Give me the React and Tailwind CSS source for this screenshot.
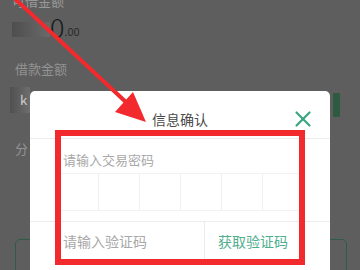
import { X } from 'lucide-react';

const App = () => {
  return (
    <div
      className="relative w-[360px] h-[270px] overflow-hidden bg-[#5e5e5e]"
      style={{ fontFamily: '"Noto Sans CJK SC", "Noto Sans", sans-serif' }}
    >
      {/* Page behind the dialog */}
      <div className="pl-[12px] pr-[14px]">
        <div className="-mt-[8px] h-[18px] text-[13px] leading-[18px] text-[#9a9a9a]">可借金额</div>
        <div className="mt-[4px] flex items-end h-[26px]">
          <div className="w-[38px] h-[15px] mb-[3px] bg-gradient-to-r from-[#4e4e4e] to-[#6a6a6a]"></div>
          <span className="text-[27px] leading-[27px] text-[#1a1a1a] font-light">0</span>
          <span className="text-[11px] leading-[14px] mb-[2px] text-[#2a2a2a]">.00</span>
        </div>
        <div className="mt-[20px] h-[18px] text-[13px] leading-[18px] text-[#939393] pl-[3px]">借款金额</div>
        <div className="mt-[9px] flex">
          <div className="w-[20px] h-[26px] -ml-[2px] bg-gradient-to-r from-[#505050] to-[#6e6e6e] text-[#cfcfcf] text-[13px] leading-[26px] pl-[10px]">k</div>
        </div>
        <div className="mt-[27px] h-[18px] text-[13px] leading-[18px] text-[#939393] pl-[3px]">分</div>
        <div className="mt-[81px] ml-[3px] w-[332px] h-[40px] rounded-[5px] border-[1.5px] border-[#2f5c44]"></div>
      </div>

      {/* Green fragment at the right edge */}
      <div className="absolute left-[333px] top-[93px] w-[7px] h-[24px] rounded-[1px] bg-[#2d5a40]"></div>

      {/* Dialog */}
      <div className="absolute left-[30px] top-[91px] w-[300px] h-[200px] bg-white rounded-t-[5px]">
        <div className="relative h-[48px] flex items-center justify-center border-b border-[#ececec]">
          <span className="text-[14px] text-[#4a4a4a] mt-[10px]">信息确认</span>
          <X className="absolute right-[14px] top-[15px] w-[26px] h-[26px] text-[#3aa57f]" strokeWidth={2} />
        </div>
        <div className="pl-[33px] mt-[12px] h-[18px] text-[13px] leading-[18px] text-[#a8a8a8]">请输入交易密码</div>
        <div className="mt-[4px] ml-[28px] w-[246px] h-[38px] grid grid-cols-6 border-y border-[#f2f2f2]">
          {[0, 1, 2, 3, 4, 5].map((i) => (
            <div key={i} className={i < 5 ? 'border-r border-[#f0f0f0]' : ''}></div>
          ))}
        </div>
        <div className="mt-[10px] h-[40px] flex border-t border-[#ececec]">
          <div className="w-[175px] pl-[33px] flex items-center text-[14px] text-[#a8a8a8] border-r border-[#ececec]">
            请输入验证码
          </div>
          <div className="pl-[13px] flex items-center text-[14px] text-[#4fae8e]">获取验证码</div>
        </div>
      </div>

      {/* Red annotation box */}
      <div className="absolute left-[55px] top-[130px] w-[250px] h-[135px] border-[6px] border-[#f22a2e]"></div>

      {/* Red annotation arrow */}
      <svg className="absolute left-0 top-0" width="360" height="270" viewBox="0 0 360 270">
        <line x1="12" y1="-4" x2="128" y2="104" stroke="#f22a2e" strokeWidth="4" />
        <polygon points="146,122 115,112 133,92" fill="#f22a2e" />
      </svg>
    </div>
  );
};

export default App;
